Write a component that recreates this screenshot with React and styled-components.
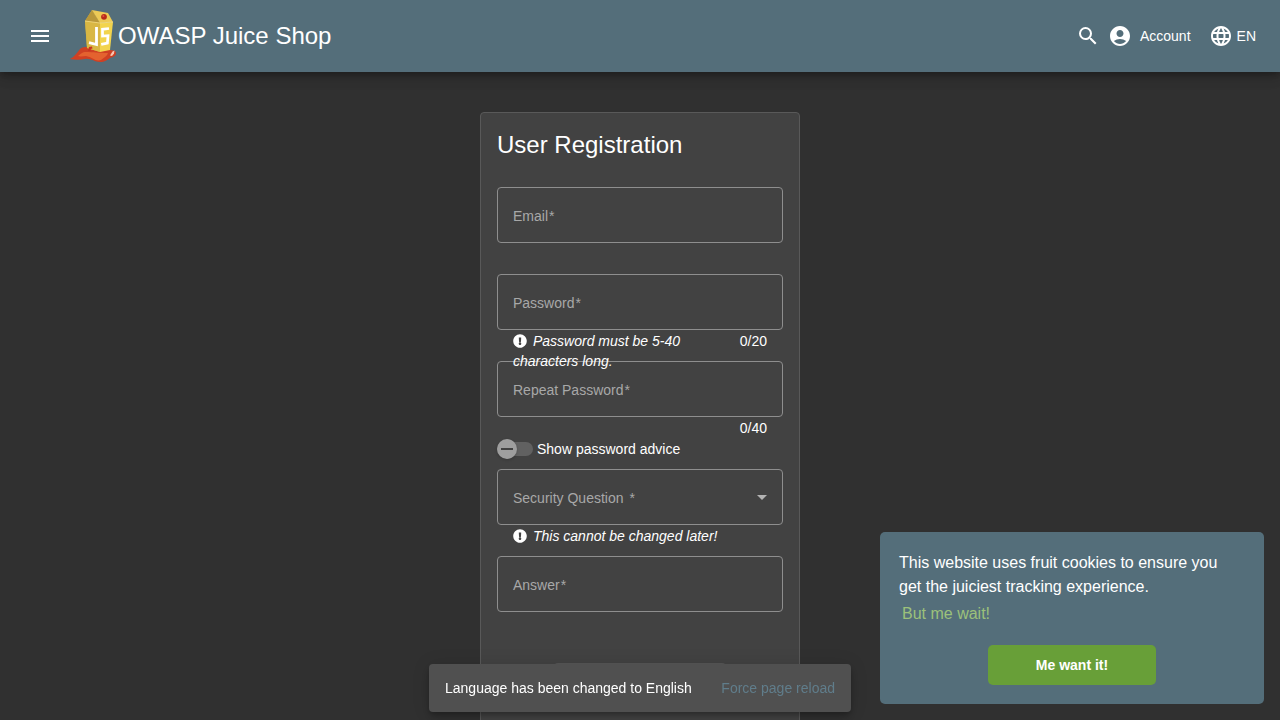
import React from "react";
import styled, { createGlobalStyle } from "styled-components";
import { MdMenu, MdSearch, MdAccountCircle, MdLanguage, MdArrowDropDown } from "react-icons/md";
import { FaExclamationCircle } from "react-icons/fa";

const GlobalStyle = createGlobalStyle`
  *, *::before, *::after { box-sizing: border-box; }
  html { scrollbar-width: none; }
  body {
    margin: 0;
    background: #303030;
    color: #fff;
    font: 14px/20px "Liberation Sans", Arial, sans-serif;
  }
  button, input, select { font: inherit; color: inherit; }
`;

const Header = styled.header`
  position: sticky;
  top: 0;
  z-index: 2;
  display: flex;
  align-items: center;
  height: 72px;
  padding: 0 24px 0 28px;
  background: #546e7a;
  box-shadow: 0 3px 5px -1px rgba(0, 0, 0, 0.2), 0 6px 10px rgba(0, 0, 0, 0.14), 0 1px 18px rgba(0, 0, 0, 0.12);
`;

const BarButton = styled.button`
  display: flex;
  align-items: center;
  gap: ${(p) => p.$gap || 0}px;
  padding: 0;
  border: 0;
  background: none;
  cursor: pointer;
`;

const Brand = styled.a`
  display: flex;
  align-items: center;
  margin-left: 18px;
  color: #fff;
  font-size: 24px;
  line-height: 32px;
  text-decoration: none;
`;

const Actions = styled.div`
  display: flex;
  align-items: center;
  gap: 8px;
  margin-left: auto;
`;

const LanguageSlot = styled.div`
  margin-left: 10px;
`;

const Main = styled.main`
  display: flex;
  justify-content: center;
  padding: 40px 16px;
`;

const Card = styled.form`
  width: 100%;
  max-width: 320px;
  padding: 16px 16px 32px;
  border: 1px solid #595959;
  border-radius: 4px;
  background: #424242;
`;

const Title = styled.h1`
  margin: 0 0 26px;
  font-size: 24px;
  line-height: 32px;
  font-weight: 400;
`;

const FieldBlock = styled.div`
  height: ${(p) => p.$height || 87}px;
`;

const Outline = styled.div`
  position: relative;
  height: 56px;

  label {
    position: absolute;
    top: 19px;
    left: 16px;
    color: #a8a8a8;
    pointer-events: none;
  }

  svg {
    position: absolute;
    top: 16px;
    right: 9px;
    color: #b3b3b3;
    pointer-events: none;
  }
`;

const Asterisk = styled.span`
  margin-left: ${(p) => p.$gap}px;
`;

const TextBox = styled.input`
  width: 100%;
  height: 56px;
  padding: 0 16px;
  border: 1px solid #8e8e8e;
  border-radius: 4px;
  outline: none;
  background: transparent;

  &:focus { border-color: #fff; }
`;

const SelectBox = styled(TextBox).attrs({ as: "select" })`
  appearance: none;
`;

const Subscript = styled.div`
  position: relative;
  z-index: 1;
  display: flex;
  justify-content: space-between;
  gap: 32px;
  padding: 1px 16px 0;
`;

const Hint = styled.em`
  svg {
    margin-right: 6px;
    vertical-align: -2px;
  }
`;

const Counter = styled.span`
  margin-left: auto;
`;

const SwitchRow = styled.label`
  display: flex;
  align-items: center;
  gap: 4px;
  height: 20px;
  margin-bottom: 10px;
`;

const Switch = styled.input`
  position: relative;
  width: 36px;
  height: 14px;
  margin: 0;
  appearance: none;
  border-radius: 7px;
  background: #616161;

  &::before {
    content: "";
    position: absolute;
    top: -3px;
    left: 0;
    width: 20px;
    height: 20px;
    border-radius: 50%;
    background: #9e9e9e;
    box-shadow: 0 1px 3px rgba(0, 0, 0, 0.2);
  }

  &::after {
    content: "";
    position: absolute;
    top: 6px;
    left: 4px;
    width: 12px;
    height: 2px;
    background: #424242;
  }

  &:checked::before { left: 16px; }
  &:checked::after { left: 20px; }
`;

const RegisterButton = styled.button`
  display: block;
  width: 60%;
  height: 40px;
  margin: 20px auto 0;
  border: 0;
  border-radius: 4px;
  background: #565656;
`;

const Snackbar = styled.div`
  position: fixed;
  bottom: 8px;
  left: 50%;
  z-index: 3;
  display: flex;
  align-items: center;
  justify-content: space-between;
  gap: 16px;
  width: 422px;
  max-width: 100%;
  height: 48px;
  padding: 0 16px;
  transform: translateX(-50%);
  border-radius: 4px;
  background: #505050;
  box-shadow: 0 3px 5px -1px rgba(0, 0, 0, 0.2), 0 6px 10px rgba(0, 0, 0, 0.14), 0 1px 18px rgba(0, 0, 0, 0.12);
  white-space: nowrap;
`;

const SnackAction = styled.button`
  padding: 0;
  border: 0;
  background: none;
  color: #607d8b;
`;

const CookieBanner = styled.aside`
  position: fixed;
  right: 16px;
  bottom: 16px;
  z-index: 3;
  display: flex;
  flex-direction: column;
  align-items: flex-start;
  width: 384px;
  max-width: 100%;
  padding: 19px;
  border-radius: 5px;
  background: #546e7a;
  font-size: 16px;
  line-height: 24px;
`;

const CookieText = styled.p`
  margin: 0;
  max-width: 340px;
`;

const CookieLink = styled.a`
  margin: 3px 3px 19px;
  color: #9cc17b;
  text-decoration: none;
`;

const CookieButton = styled.button`
  align-self: center;
  width: 168px;
  height: 40px;
  border: 0;
  border-radius: 5px;
  background: #689f38;
  font-size: 14px;
  font-weight: 700;
`;

function JuiceLogo() {
  return (
    <svg width="48" height="54" viewBox="0 0 48 54" aria-hidden="true">
      <path d="M0 50c4-2 7-6 10-10 2-2 5-2 8-2l22 3c4 0 6 1 6 3 0 3-3 4-6 5-3 2-5 4-10 4-6 0-9-4-15-3-5 1-10 1-15 0z" fill="#cf4023" />
      <path d="M8 47c3-2 4-4 8-4 7 0 13 1 22 1-1 3-3 4-7 7-5 2-9-3-15-4-3 0-5 1-8 0z" fill="#e4622f" />
      <path d="M15 12 22 1l8 13v29l-13-4z" fill="#d2ae3b" />
      <path d="M15 12 22 1l8 13z" fill="#b9983a" />
      <path d="M22 1l16 3 5 9-13 1z" fill="#edca55" />
      <path d="M15 12l15 2v29l-13-4z" fill="#d9b744" />
      <path d="M30 14l13-1-3 28-10 2z" fill="#f2d44d" />
      <path d="M15 12l15 2 13-1" fill="none" stroke="#f8e391" strokeWidth=".7" />
      <path d="M26.5 18v17.5L19 33.7" fill="none" stroke="#fff" strokeWidth="2.8" />
      <path d="M39 19.5l-6.5.8v6.8l5.5-.4-.6 7.4-6.2 1.3" fill="none" stroke="#fff" strokeWidth="2.7" />
      <circle cx="34" cy="7.8" r="2.9" fill="#b92b1b" />
      <circle cx="33.3" cy="7" r="1" fill="#e1593a" />
      <path d="M18 42l1-4 3-.5.5 2-2 .5v2z" fill="#c8341f" />
      <path d="M42.500 42.500l2-1-.5 3-2 2.500-2-.5z" fill="#f7c6b3" />
    </svg>
  );
}

function Field({ id, label, gap = 1, height, hint, counter, type = "text", select }) {
  return (
    <FieldBlock $height={height}>
      <Outline>
        {select ? (
          <SelectBox id={id} defaultValue=""><option value="" /></SelectBox>
        ) : (
          <TextBox id={id} type={type} />
        )}
        <label htmlFor={id}>{label}<Asterisk $gap={gap}>*</Asterisk></label>
        {select && <MdArrowDropDown size={24} />}
      </Outline>
      <Subscript>
        {hint && <Hint><FaExclamationCircle size={14} />{hint}</Hint>}
        {counter && <Counter>{counter}</Counter>}
      </Subscript>
    </FieldBlock>
  );
}

export default function App() {
  return (
    <>
      <GlobalStyle />
      <Header>
        <BarButton aria-label="Open menu"><MdMenu size={24} /></BarButton>
        <Brand href="#"><JuiceLogo />OWASP Juice Shop</Brand>
        <Actions>
          <BarButton aria-label="Search"><MdSearch size={24} /></BarButton>
          <BarButton $gap={8}><MdAccountCircle size={24} />Account</BarButton>
          <LanguageSlot>
            <BarButton $gap={4}><MdLanguage size={24} />EN</BarButton>
          </LanguageSlot>
        </Actions>
      </Header>
      <Main>
        <Card>
          <Title>User Registration</Title>
          <Field id="email" label="Email" type="email" />
          <Field id="password" label="Password" type="password" hint="Password must be 5-40 characters long." counter="0/20" />
          <Field id="repeat" label="Repeat Password" type="password" counter="0/40" height={78} />
          <SwitchRow>
            <Switch type="checkbox" role="switch" />
            Show password advice
          </SwitchRow>
          <Field id="question" label="Security Question" gap={6} select hint="This cannot be changed later!" />
          <Field id="answer" label="Answer" />
          <RegisterButton type="submit" disabled aria-label="Register" />
        </Card>
      </Main>
      <Snackbar role="status">
        <span>Language has been changed to English</span>
        <SnackAction>Force page reload</SnackAction>
      </Snackbar>
      <CookieBanner aria-label="Cookie consent">
        <CookieText>This website uses fruit cookies to ensure you get the juiciest tracking experience.</CookieText>
        <CookieLink href="#">But me wait!</CookieLink>
        <CookieButton>Me want it!</CookieButton>
      </CookieBanner>
    </>
  );
}
